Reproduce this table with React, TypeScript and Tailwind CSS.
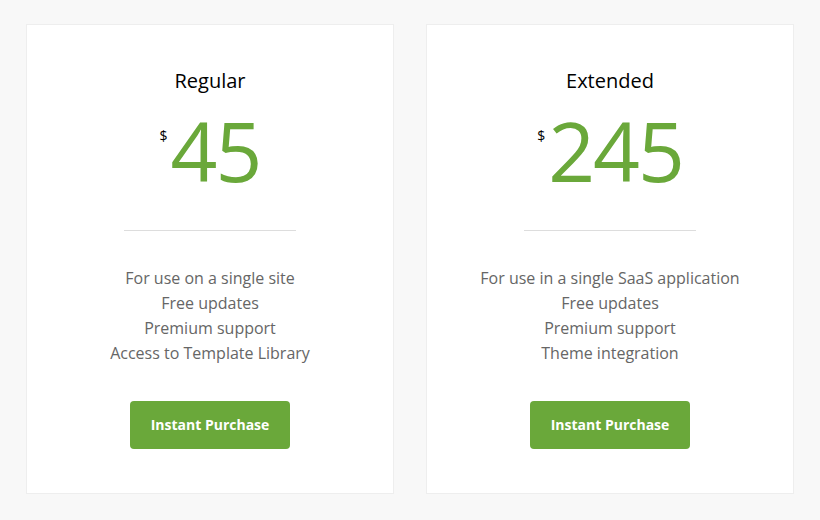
const PLANS = [
  {
    name: 'Regular',
    price: '45',
    features: ['For use on a single site', 'Free updates', 'Premium support', 'Access to Template Library'],
  },
  {
    name: 'Extended',
    price: '245',
    features: ['For use in a single SaaS application', 'Free updates', 'Premium support', 'Theme integration'],
  },
]

export default function App() {
  return (
    <div
      className="min-h-[520px] w-full bg-[#f8f8f8] px-[26px] pt-[24px]"
      style={{ fontFamily: '"Open Sans", "Liberation Sans", sans-serif' }}
    >
      <div className="grid grid-cols-2 gap-[32px]">
        {PLANS.map((p) => (
          <div
            key={p.name}
            className="flex h-[470px] flex-col items-center border border-[#eeeeee] bg-white pt-[42px]"
          >
            <h2 className="text-[20px] leading-[28px] text-black">{p.name}</h2>
            <div className="mt-[15px] flex items-start">
              <span className="mt-[17px] mr-[3px] text-[14px] leading-[18px] text-black">$</span>
              <span className="text-[82px] leading-[80px] tracking-[-2px] text-[#6aa83a]">{p.price}</span>
            </div>
            <div className="mt-[40px] h-px w-[172px] bg-[#dddddd]" />
            <ul className="mt-[35px] text-center text-[16px] leading-[25px] text-[#666666]">
              {p.features.map((f) => (
                <li key={f}>{f}</li>
              ))}
            </ul>
            <button
              type="button"
              className="mt-[35px] h-[48px] w-[160px] rounded-[4px] bg-[#6aa83a] text-[14px] font-bold leading-[46px] text-white"
            >
              Instant Purchase
            </button>
          </div>
        ))}
      </div>
    </div>
  )
}
